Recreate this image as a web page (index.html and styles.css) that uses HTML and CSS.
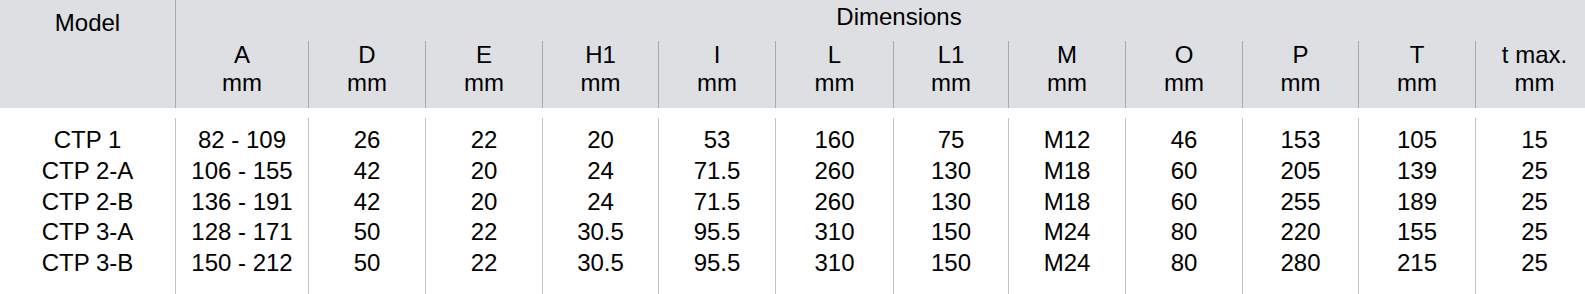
FILE: index.html
```html
<!DOCTYPE html>
<html lang="en">
<head>
<meta charset="utf-8">
<title>CTP dimensions</title>
<link rel="stylesheet" href="styles.css">
</head>
<body>
<div class="sheet">
  <div class="head">
    <div class="h-model">Model</div>
    <div class="h-dims">Dimensions</div>
    <div class="h-sub">A<br>mm</div>
    <div class="h-sub">D<br>mm</div>
    <div class="h-sub">E<br>mm</div>
    <div class="h-sub">H1<br>mm</div>
    <div class="h-sub">I<br>mm</div>
    <div class="h-sub">L<br>mm</div>
    <div class="h-sub">L1<br>mm</div>
    <div class="h-sub">M<br>mm</div>
    <div class="h-sub">O<br>mm</div>
    <div class="h-sub">P<br>mm</div>
    <div class="h-sub">T<br>mm</div>
    <div class="h-sub">t max.<br>mm</div>
  </div>
  <div class="body">
    <div class="row"><div class="c">CTP 1</div><div class="c">82 - 109</div><div class="c">26</div><div class="c">22</div><div class="c">20</div><div class="c">53</div><div class="c">160</div><div class="c">75</div><div class="c">M12</div><div class="c">46</div><div class="c">153</div><div class="c">105</div><div class="c">15</div></div>
    <div class="row"><div class="c">CTP 2-A</div><div class="c">106 - 155</div><div class="c">42</div><div class="c">20</div><div class="c">24</div><div class="c">71.5</div><div class="c">260</div><div class="c">130</div><div class="c">M18</div><div class="c">60</div><div class="c">205</div><div class="c">139</div><div class="c">25</div></div>
    <div class="row"><div class="c">CTP 2-B</div><div class="c">136 - 191</div><div class="c">42</div><div class="c">20</div><div class="c">24</div><div class="c">71.5</div><div class="c">260</div><div class="c">130</div><div class="c">M18</div><div class="c">60</div><div class="c">255</div><div class="c">189</div><div class="c">25</div></div>
    <div class="row"><div class="c">CTP 3-A</div><div class="c">128 - 171</div><div class="c">50</div><div class="c">22</div><div class="c">30.5</div><div class="c">95.5</div><div class="c">310</div><div class="c">150</div><div class="c">M24</div><div class="c">80</div><div class="c">220</div><div class="c">155</div><div class="c">25</div></div>
    <div class="row"><div class="c">CTP 3-B</div><div class="c">150 - 212</div><div class="c">50</div><div class="c">22</div><div class="c">30.5</div><div class="c">95.5</div><div class="c">310</div><div class="c">150</div><div class="c">M24</div><div class="c">80</div><div class="c">280</div><div class="c">215</div><div class="c">25</div></div>
  </div>
</div>
</body>
</html>
```
FILE: styles.css
```css
html, body {
  margin: 0;
  padding: 0;
  background: #ffffff;
}
body {
  font-family: "Liberation Sans", Arial, sans-serif;
  font-size: 24px;
  color: #000000;
  overflow: hidden;
}
.sheet {
  width: 1593px;
}
.head,
.body {
  display: grid;
  grid-template-columns: 175px 133px 117px 117px 116px 117px 118px 115px 117px 117px 116px 117px 118px;
}
.head {
  background: #dddfe3;
  height: 108px;
  grid-template-rows: 41px 67px;
  line-height: 28px;
  text-align: center;
}
.h-model {
  grid-row: 1 / 3;
  grid-column: 1;
  padding-top: 9px;
}
.h-dims {
  grid-row: 1;
  grid-column: 2 / -1;
  border-left: 1px solid #a9abae;
  padding-top: 3px;
  padding-left: 29px;
}
.h-sub {
  grid-row: 2;
  border-left: 1px solid #a9abae;
}
.body {
  margin-top: 10px;
  line-height: 30.8px;
  text-align: center;
}
.row {
  display: contents;
}
.c {
  border-left: 1px solid #c3c3c3;
  white-space: nowrap;
}
.c:first-child {
  border-left: 0;
}
.row:first-child .c {
  padding-top: 7px;
}
.row:last-child .c {
  padding-bottom: 15px;
}
```
